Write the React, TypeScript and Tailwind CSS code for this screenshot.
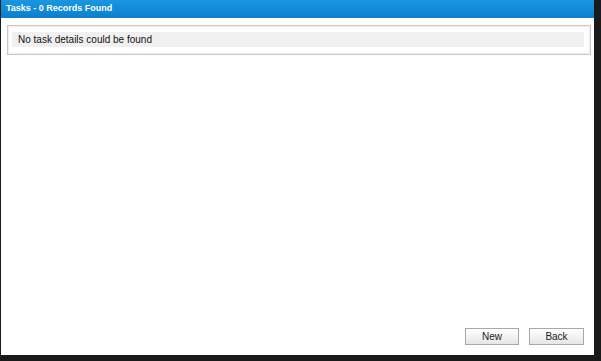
export default function App() {
  return (
    <div className="w-[601px] h-[361px] bg-[#1a1a1a] relative overflow-hidden" style={{ fontFamily: 'Arial, "Liberation Sans", sans-serif' }}>
      <div className="absolute left-[1px] top-0 w-[593px] h-[355px] bg-white flex flex-col">
        <div className="h-[18px] bg-gradient-to-b from-[#1a97e0] to-[#0a7fcd] flex items-center pl-[5px] text-white font-bold text-[9px]">
          Tasks - 0 Records Found
        </div>
        <div className="ml-[6px] mr-[3px] mt-[7px] border border-[#c8c8c8] pl-[4px] pr-[6px] pt-[6px] pb-[7px] shadow-[inset_0_0_0_1px_#f0f0f0]">
          <div className="h-[15px] bg-[#f0f0f0] flex items-center pl-[6px] text-[10px] text-[#111]">
            No task details could be found
          </div>
        </div>
        <div className="flex-1" />
        <div className="flex justify-end gap-[10px] pr-[10px] pb-[10px]">
          <button className="w-[54px] h-[17px] border border-[#a8a8a8] bg-gradient-to-b from-white to-[#e6e6e6] text-[10px] text-[#222] flex items-center justify-center">New</button>
          <button className="w-[55px] h-[17px] border border-[#a8a8a8] bg-gradient-to-b from-white to-[#e6e6e6] text-[10px] text-[#222] flex items-center justify-center">Back</button>
        </div>
      </div>
    </div>
  );
}
